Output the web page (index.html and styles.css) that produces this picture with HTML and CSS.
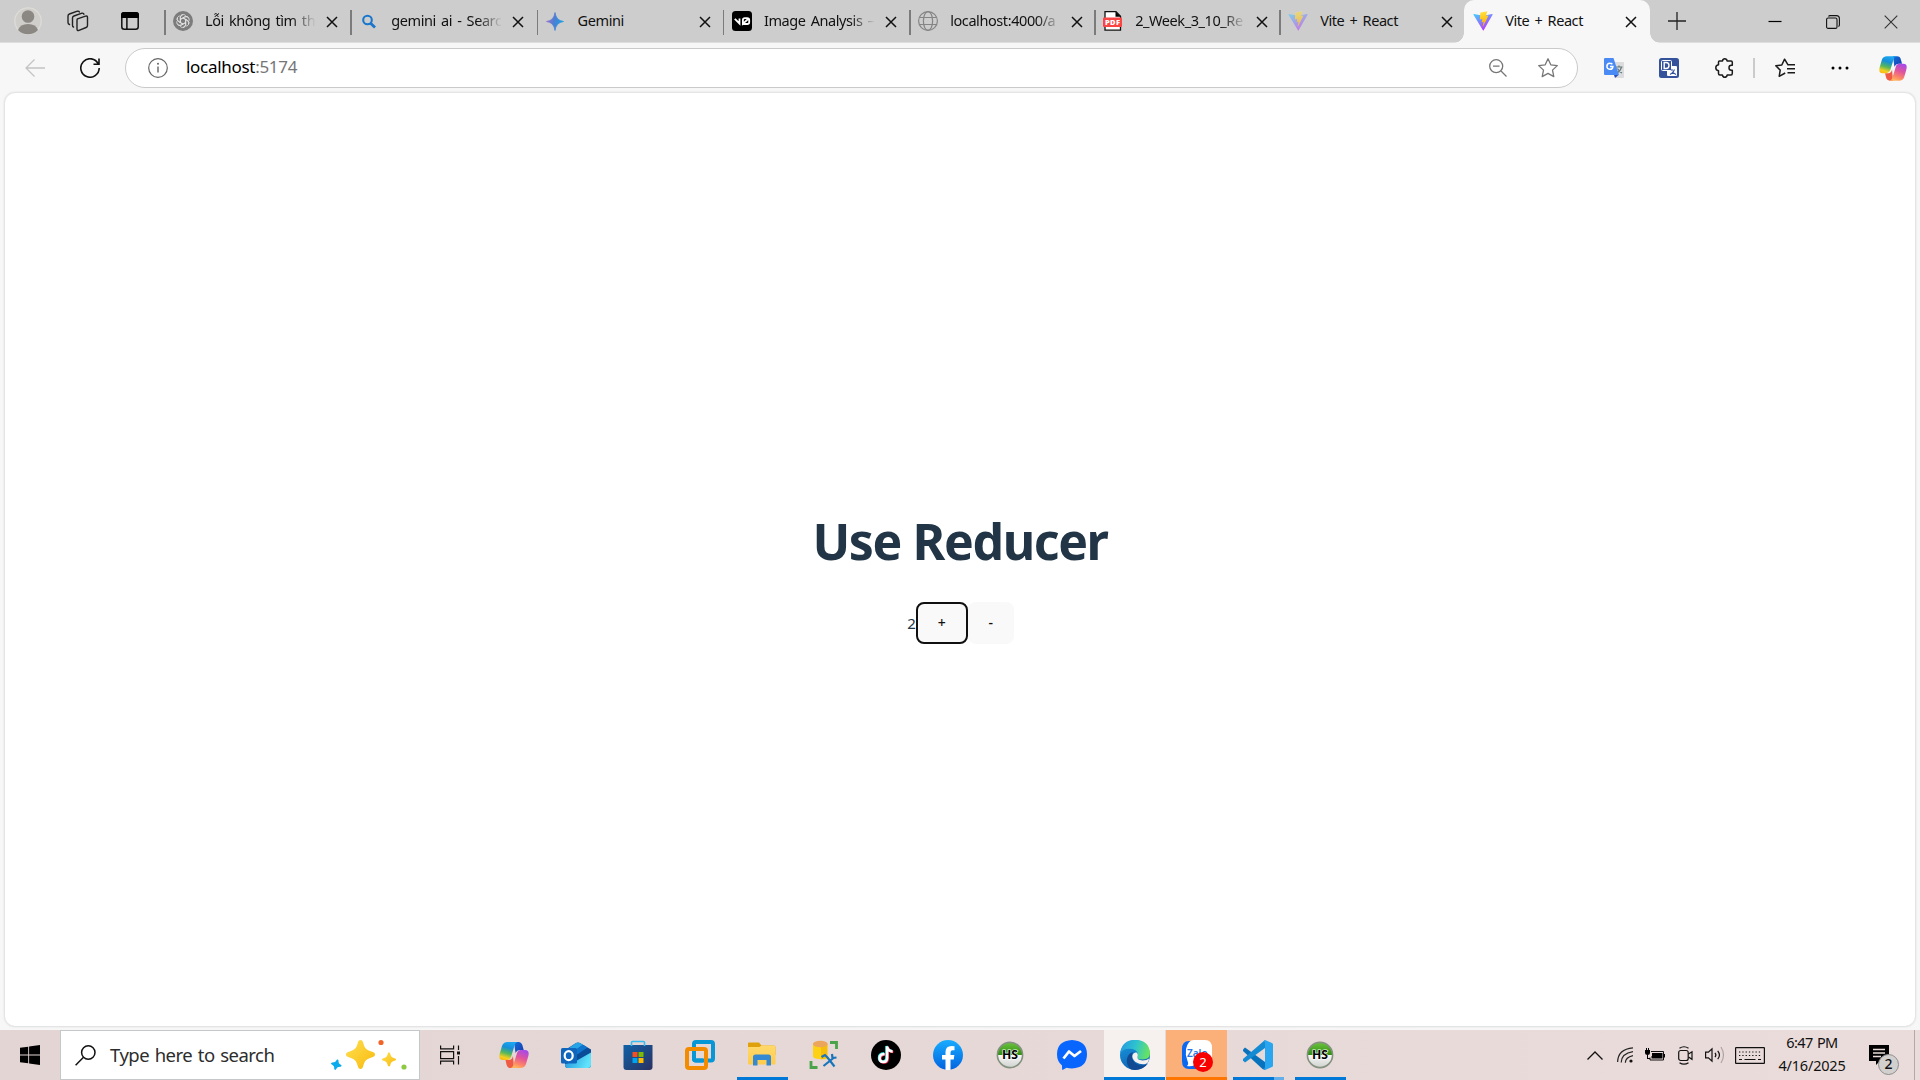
FILE: index.html
```html
<!DOCTYPE html>
<html lang="en">
<head>
<meta charset="utf-8">
<title>Vite + React</title>
<link rel="stylesheet" href="styles.css">
</head>
<body>
<svg class="defs" width="0" height="0" aria-hidden="true">
  <defs>
    <linearGradient id="cpA" x1=".5" y1="0" x2=".2" y2="1"><stop offset="0" stop-color="#1ba5f0"/><stop offset=".3" stop-color="#168fd8"/><stop offset=".6" stop-color="#55b75a"/><stop offset=".85" stop-color="#f4cf21"/><stop offset="1" stop-color="#fbb70c"/></linearGradient>
    <linearGradient id="cpB" x1=".8" y1="0" x2=".4" y2="1"><stop offset="0" stop-color="#a348ee"/><stop offset=".45" stop-color="#e1549c"/><stop offset=".8" stop-color="#fd8766"/><stop offset="1" stop-color="#ffb45e"/></linearGradient>
    <linearGradient id="cpC" x1="0" y1="0" x2="1" y2="1"><stop offset="0" stop-color="#0f6fdb"/><stop offset="1" stop-color="#1b38ad"/></linearGradient>
    <linearGradient id="vA" x1="0" y1="0" x2=".6" y2="1"><stop offset="0" stop-color="#41d1ff"/><stop offset="1" stop-color="#bd34fe"/></linearGradient>
    <linearGradient id="vB" x1=".5" y1="0" x2=".6" y2="1"><stop offset="0" stop-color="#ffea83"/><stop offset=".1" stop-color="#ffdd35"/><stop offset="1" stop-color="#ffa800"/></linearGradient>
    <linearGradient id="gem" x1="0" y1=".4" x2="1" y2=".6"><stop offset="0" stop-color="#9b72cb"/><stop offset=".45" stop-color="#4a7fd4"/><stop offset="1" stop-color="#1ba1e3"/></linearGradient>
    <linearGradient id="gold" x1="0" y1="0" x2="1" y2="1"><stop offset="0" stop-color="#ffe052"/><stop offset="1" stop-color="#f8b90c"/></linearGradient>
    <linearGradient id="store" x1="0" y1="0" x2="1" y2="1"><stop offset="0" stop-color="#0f62a8"/><stop offset="1" stop-color="#2b3160"/></linearGradient>
    <linearGradient id="fold" x1="0" y1="0" x2="0" y2="1"><stop offset="0" stop-color="#ffd96b"/><stop offset="1" stop-color="#ffcb4c"/></linearGradient>
    <linearGradient id="fb" x1="0" y1="0" x2="0" y2="1"><stop offset="0" stop-color="#18acfe"/><stop offset="1" stop-color="#0163e0"/></linearGradient>
    <linearGradient id="hs" x1="0" y1="0" x2="0" y2="1"><stop offset="0" stop-color="#6cc43c"/><stop offset=".5" stop-color="#2f8d12"/><stop offset=".51" stop-color="#f7f7f7"/><stop offset="1" stop-color="#cfd2ce"/></linearGradient>
    <linearGradient id="edA" x1="0" y1=".3" x2="1" y2=".5"><stop offset="0" stop-color="#269be0"/><stop offset=".5" stop-color="#2ec3cf"/><stop offset="1" stop-color="#6be45c"/></linearGradient>
    <linearGradient id="edB" x1="0" y1="0" x2=".4" y2="1"><stop offset="0" stop-color="#1a9ae0"/><stop offset="1" stop-color="#0f64b4"/></linearGradient>
    <linearGradient id="olA" x1="0" y1="0" x2="1" y2=".3"><stop offset="0" stop-color="#1c8fdc"/><stop offset="1" stop-color="#5fe3fb"/></linearGradient>
    <symbol id="close" viewBox="0 0 12 12"><path d="M1 1 11 11M11 1 1 11" fill="none" stroke="currentColor" stroke-width="1.5"/></symbol>
    <symbol id="copilot" viewBox="0 0 30 28">
      <path d="M15 1h4.500q3 0 4 3.500l1.200 4.500H21q-3 0-4.500 3z" fill="url(#cpC)"/>
      <path d="M15 27h-3.500q-3 0-4-3.500L6.500 19H10q3 0 4-4z" fill="#ee5a43"/>
      <path d="M8.500 1H19q-2.500 0-3.500 3.500L12 16q-1 3-4 3H4Q-1 19 .8 12.500L3 5Q4.300 1 8.500 1z" fill="url(#cpA)"/>
      <path d="M21.500 27H11q2.500 0 3.500-3.500L18 12q1-3 4-3h4q5 0 3.200 6.500L27 23q-1.300 4-5.500 4z" fill="url(#cpB)"/>
    </symbol>
    <symbol id="vite" viewBox="0 0 32 32">
      <path d="M31.300 5.900 17.100 30.900c-.3.500-1 .5-1.300 0L.8 5.900c-.3-.5.100-1.200.8-1.100L16.100 7.400h.3L30.500 4.800c.6-.1 1.100.6.800 1.100z" fill="url(#vA)"/>
      <path d="M22.300.3 12 2.300c-.2 0-.3.200-.3.300l-.7 10.500c0 .300.200.5.500.4l2.900-.7c.3-.1.500.2.500.5l-.9 4.100c-.1.300.2.500.5.400l1.800-.5c.3-.1.500.2.500.5l-1.400 6.500c-.1.400.5.600.7.300l.1-.2 8.500-16.800c.100-.300-.1-.600-.4-.500l-3 .6c-.3.100-.5-.2-.4-.5l1.900-6.700c.1-.3-.2-.6-.5-.5z" fill="url(#vB)"/>
    </symbol>
    <symbol id="hsi" viewBox="0 0 30 30">
      <circle cx="15" cy="15" r="12.600" fill="url(#hs)" stroke="#84917f" stroke-width="1.600"/>
      <text x="15" y="19.300" text-anchor="middle" font-family="Open Sans, sans-serif" font-weight="700" font-size="12" textLength="16" lengthAdjust="spacingAndGlyphs" stroke="#fff" stroke-width="1.200" paint-order="stroke">HS</text>
    </symbol>
    <symbol id="spark" viewBox="0 0 20 20"><path d="M10 0c1 0 1.500.7 1.800 1.700 1 3.900 2 5.100 6.200 6.400 1.300.4 2 1 2 1.900s-.7 1.500-2 1.900c-4.200 1.300-5.200 2.500-6.200 6.400C11.500 19.300 11 20 10 20s-1.500-.7-1.800-1.700c-1-3.900-2-5.100-6.200-6.400C.7 11.500 0 10.900 0 10s.7-1.500 2-1.900c4.200-1.300 5.200-2.500 6.200-6.400C8.500.7 9 0 10 0z"/></symbol>
  </defs>
</svg>

<header class="tabbar">
  <div class="slot s56"><svg width="28" height="28" viewBox="0 0 28 28"><circle cx="14" cy="14" r="13.200" fill="#d0cecb" stroke="#dedcd7" stroke-width="1.300"/><circle cx="14" cy="9.500" r="6.300" fill="#8b8783"/><path d="M4 23Q6 17 14 17t10 6q-4 4.300-10 4.300T4 23z" fill="#8b8783"/></svg></div>
  <div class="slot s44"><svg width="22" height="22" viewBox="0 0 22 22" fill="none" stroke="#222" stroke-width="1.400" stroke-linejoin="round" stroke-linecap="round"><path d="m10.500 8.800 8-2.700q2-.6 2 1.400v8q0 1.500-1.400 2L12 20.300q-2 .7-2-1.300v-8.500q0-1.300.5-1.700zM6.500 17q-1-.3-1-1.800V8q0-1.500 1.400-2L15 3.200q1.600-.3 2 1M2.500 14.500q-1.500-.5-1.500-2V6q0-1.500 1.400-2l8-2.800q1.500-.4 2 .8"/></svg></div>
  <div class="slot s64"><svg width="18" height="18" viewBox="0 0 18 18"><rect x=".8" y=".8" width="16.400" height="16.400" rx="2.500" fill="none" stroke="#111" stroke-width="1.500"/><path d="M0 6V3q0-3 3-3h12q3 0 3 3v3zM5.200 5h1.400v12H5.200z"/></svg></div>
  <nav class="tabs">
    <div class="tab"><svg class="fav" viewBox="0 0 20 20"><circle cx="10" cy="10" r="10" fill="#7c7c7c"/><g fill="none" stroke="#e6e6e6" stroke-width=".8"><path id="petal" d="M7.300 11.600V6.200q.3-2.600 2.900-2.700 1.700 0 2.600 1.200M7.300 8.500l4.600-2.600q2.200-.9 3.700.8"/><use href="#petal" transform="rotate(60 10 10)"/><use href="#petal" transform="rotate(120 10 10)"/><use href="#petal" transform="rotate(180 10 10)"/><use href="#petal" transform="rotate(240 10 10)"/><use href="#petal" transform="rotate(300 10 10)"/></g></svg><span class="name fade">Lỗi không tìm th</span><svg class="x"><use href="#close"/></svg></div>
    <div class="tab"><svg class="fav" viewBox="0 0 20 20" fill="none" stroke="#1a76cc"><circle cx="8.500" cy="9" r="4.300" stroke-width="2.100"/><path d="m11.600 12.200 4.400 4.400" stroke-width="2.800"/></svg><span class="name fade">gemini ai - Searc</span><svg class="x"><use href="#close"/></svg></div>
    <div class="tab"><svg class="fav" viewBox="0 0 20 20"><path d="M9 1.500Q10 9.500 17.500 10.500 10 11.500 9 19.500 8 11.500.5 10.500 8 9.500 9 1.500z" fill="url(#gem)" stroke="url(#gem)" stroke-width=".8"/></svg><span class="name">Gemini</span><svg class="x"><use href="#close"/></svg></div>
    <div class="tab"><svg class="fav" viewBox="0 0 20 20"><rect width="20" height="20" rx="3.500"/><path d="m2.800 7.800 4.700 4.700V7.500M11.200 13h4q2 0 2-1.800V9q0-1.800-2-1.800h-2.300q-2 0-2 1.800v3.800l5.700-5.300" fill="none" stroke="#fff" stroke-width="1.800"/></svg><span class="name fade">Image Analysis –</span><svg class="x"><use href="#close"/></svg></div>
    <div class="tab"><svg class="fav" viewBox="0 0 20 20" fill="none" stroke="#858585" stroke-width="1.200"><circle cx="10" cy="10" r="9.400"/><ellipse cx="10" cy="10" rx="4.600" ry="9.400"/><path d="M1.500 6.500h17M1.500 13.500h17"/></svg><span class="name fade">localhost:4000/a</span><svg class="x"><use href="#close"/></svg></div>
    <div class="tab"><svg class="fav" viewBox="0 0 20 20"><path d="M2 .7h11l4.500 4.500v14H2z" fill="#fff" stroke="#111" stroke-width="1.300"/><path d="M12.500.7v5h5z"/><rect x="0" y="6.500" width="19" height="9.500" rx="1" fill="#fa4545"/><text x="9.500" y="14" text-anchor="middle" font-family="Open Sans, sans-serif" font-weight="800" font-size="7.500" textLength="15" fill="#fff">PDF</text></svg><span class="name fade">2_Week_3_10_Re</span><svg class="x"><use href="#close"/></svg></div>
    <div class="tab"><svg class="fav dim"><use href="#vite"/></svg><span class="name">Vite + React</span><svg class="x"><use href="#close"/></svg></div>
    <div class="tab active"><svg class="fav"><use href="#vite"/></svg><span class="name">Vite + React</span><svg class="x"><use href="#close"/></svg></div>
  </nav>
  <div class="slot newtab"><svg width="18" height="18" viewBox="0 0 18 18"><path d="M9 0v18M0 9h18" stroke="#222" stroke-width="1.300"/></svg></div>
  <div class="windowctl">
    <svg width="14" height="14" viewBox="0 0 14 14"><path d="M.5 6.500h13" stroke="#000" stroke-width="1.200"/></svg>
    <svg width="14" height="14" viewBox="0 0 14 14" fill="none" stroke="#111" stroke-width="1.100"><rect x=".6" y="3" width="10.400" height="10.400" rx="1.500"/><path d="M2.500 1.500Q3 .6 4 .6h6.400q3 0 3 3V10q0 1-1 1.400"/></svg>
    <svg width="14" height="14" viewBox="0 0 14 14"><path d="m.7.700 12.600 12.600M13.300.7.700 13.300" stroke="#333" stroke-width="1.100"/></svg>
  </div>
</header>

<div class="toolbar">
  <div class="slot back"><svg width="20" height="18" viewBox="0 0 20 18" fill="none" stroke="#c4c4c4" stroke-width="1.300"><path d="M20 9H1M9.500.500 1 9l8.500 8.500"/></svg></div>
  <div class="slot reload"><svg width="20" height="20" viewBox="0 0 20 20" fill="none" stroke="#111" stroke-width="1.600"><path d="M18.300 6A9.200 9.200 0 1 0 19.200 10M19 .500v5.800h-5.500"/></svg></div>
  <div class="address">
    <svg width="20" height="20" viewBox="0 0 20 20"><circle cx="10" cy="10" r="9.300" fill="none" stroke="#666" stroke-width="1.200"/><path d="M10 8.500v6" stroke="#666" stroke-width="1.400"/><circle cx="10" cy="5.700" r="1" fill="#666"/></svg>
    <span class="url">localhost<span class="port">:5174</span></span>
    <svg class="zoomicon" width="18" height="18" viewBox="0 0 18 18" fill="none" stroke="#767676" stroke-width="1.300"><circle cx="7.200" cy="7.200" r="6.500"/><path d="m12 12 5.500 5.500M4 7.200h6.500"/></svg>
    <svg width="20" height="20" viewBox="0 0 20 20" fill="none" stroke="#767676" stroke-width="1.300" stroke-linejoin="round"><path d="m10 .8 2.800 6 6.500.8-4.800 4.500 1.300 6.500L10 15.400l-5.800 3.200 1.300-6.500L.7 7.600l6.500-.8z"/></svg>
  </div>
  <div class="slot translate"><svg width="20" height="20" viewBox="0 0 20 20"><path d="M8 4h11q1 0 1 1v14q0 1-1 1h-7z" fill="#dcdcdc"/><path d="M10 17h4.500l-3.500 3z" fill="#2b50b8"/><path d="M11.500 9h7M15 7.500V9m2.500 0q-.8 4-4.500 6m.5-4.500q1.500 3 4.500 4.500" fill="none" stroke="#61777b" stroke-width="1.200"/><path d="M1 0h8.500L15 17H1q-1 0-1-1V1q0-1 1-1z" fill="#4a8af4"/><path d="M8.300 6.300Q7.500 5.300 6 5.300a3 3 0 1 0 2.900 3.300H6" fill="none" stroke="#fff" stroke-width="1.500"/></svg></div>
  <div class="slot dict"><svg width="20" height="20" viewBox="0 0 20 20"><rect width="20" height="20" rx="2.500" fill="#34539b"/><rect x="2.500" y="2.500" width="10" height="10" rx="1" fill="none" stroke="#fff"/><path d="M5.200 4.500H7q3 0 3 3t-3 3H5.200z" fill="none" stroke="#fff" stroke-width="1.400"/><path d="M12.500 8H17q1 0 1 1v8q0 1-1 1H9q-1 0-1-1v-4.500h4.500z" fill="#fff"/><path d="M11 16.500q3.500-1.500 4.500-5M12 12h2m-1 2 4 2.500" fill="none" stroke="#34539b" stroke-width="1.100"/></svg></div>
  <div class="slot puzzle"><svg width="19" height="20" viewBox="0 0 19 20" fill="none" stroke="#1b1b1b" stroke-width="1.500" stroke-linejoin="round"><path d="M4.500 3h3Q7.800.8 9.800.8t2.300 2.200h4q1.200 0 1.200 1.200v3h-1q-2.300 0-2.300 2.500t2.300 2.500h1v3q0 1.800-1.300 1.800h-3.800q-.4 2.200-2.400 2.200T7.400 17H5q-1.500 0-1.500-1.500v-2.800Q.8 12.200.8 9.700t2.700-3V4q0-1 1-1z"/></svg></div>
  <i class="divider"></i>
  <div class="slot favs"><svg width="20" height="20" viewBox="0 0 20 20" fill="none" stroke="#1b1b1b" stroke-width="1.500" stroke-linejoin="round"><path d="M13 6.800 9.600 1.200 6.800 7l-6 .8 4.400 4.300-1 6.200 6-3.300M12.500 6.800H20M12 10.800h8M12.500 14.800H20"/></svg></div>
  <div class="slot more"><svg width="18" height="4" viewBox="0 0 18 4"><circle cx="2" cy="2" r="1.500"/><circle cx="9" cy="2" r="1.500"/><circle cx="16" cy="2" r="1.500"/></svg></div>
  <div class="slot side"><svg width="28" height="27"><use href="#copilot"/></svg></div>
</div>

<main class="viewport">
  <div class="page">
    <h1>Use Reducer</h1>
    <div class="counter"><span class="count">2</span><button class="btn focused">+</button><button class="btn minus">-</button></div>
  </div>
</main>

<footer class="taskbar">
  <div class="slot start"><svg width="20" height="20" viewBox="0 0 20 20"><path d="M0 2.800 8.200 1.700v7.900H0zM9.100 1.500 20 0v9.600H9.100zM0 10.500h8.200v7.800L0 17.200zM9.100 10.500H20V20L9.100 18.500z"/></svg></div>
  <div class="search">
    <svg width="21" height="21" viewBox="0 0 21 21" fill="none" stroke="#111" stroke-width="1.500"><circle cx="13.300" cy="7.500" r="6.700"/><path d="M8.500 12.300.6 20.200"/></svg>
    <span class="hint">Type here to search</span>
    <svg class="sparkles" width="78" height="34" viewBox="0 0 78 34"><use href="#spark" x="16" y="2" width="29" height="29" fill="url(#gold)"/><use href="#spark" x="52" y="14" width="14" height="15" fill="url(#gold)"/><use href="#spark" x="1" y="21" width="11" height="11" fill="#0cabeb" transform="rotate(15 6 26)"/><circle cx="51" cy="4.500" r="2.600" fill="#f16529"/><circle cx="74" cy="29" r="2.600" fill="#8fc843"/></svg>
  </div>
  <div class="slot taskview"><svg width="21" height="20" viewBox="0 0 21 20" fill="none" stroke="#111" stroke-width="1.200"><path d="M.6.500v3.300h13V.500M.6 19.500v-3.300h13v3.300M.6 6.600h13v7H.6zM18.500.500v4.500M18.500 11v8.500"/><path d="M17 6.500h3v3h-3z" fill="#111" stroke="none"/></svg></div>
  <div class="apps">
    <div class="app"><svg width="30" height="28"><use href="#copilot"/></svg></div>
    <div class="app"><svg width="30" height="28" viewBox="0 0 30 28"><path d="M4 9 15 2q2-1.200 4 0l11 6.500V24q0 3-3 3H7q-3 0-3-3z" fill="#0a4c98"/><path d="M5 9 15 2q2-1.200 4 0l3 1.800L9 13z" fill="#27a4e6"/><path d="m22 3.800 4.500 2.700L14 15l-5-2z" fill="#0f74cd"/><path d="M30 11.500V24q0 3-3 3H7q-3 0-3-3v-1l11-3z" fill="url(#olA)"/><rect x="0" y="7" width="16" height="15.500" rx="1.500" fill="#1066bd"/><ellipse cx="7.700" cy="14.700" rx="4" ry="4.500" fill="none" stroke="#fff" stroke-width="2.200"/></svg></div>
    <div class="app"><svg width="30" height="30" viewBox="0 0 30 30"><path d="M.5 5h29v22q0 3-3 3h-23q-3 0-3-3z" fill="url(#store)"/><path d="M8.500 6V2.500q0-1 1-1h11q1 0 1 1V6" fill="none" stroke="#35bdf2" stroke-width="1.600"/><path d="M9.500 12h5v5h-5z" fill="#f25022"/><path d="M15.500 12h5v5h-5z" fill="#7fba00"/><path d="M9.500 18h5v5h-5z" fill="#00a4ef"/><path d="M15.500 18h5v5h-5z" fill="#ffb900"/></svg></div>
    <div class="app"><svg width="30" height="30" viewBox="0 0 30 30" fill="none" stroke-width="4"><rect x="9" y="2" width="19" height="18.500" rx="2" stroke="#0797d7"/><rect x="2" y="9" width="19" height="19" rx="2" stroke="#f38b00"/><path d="M9 12v6.500q0 2 2 2h7" stroke="#0797d7"/></svg></div>
    <div class="app running"><svg width="28" height="26" viewBox="0 0 28 26"><path d="M0 1.500Q0 .500 1 .500h10l2.500 3H26q1.500 0 1.500 1.500v8H0z" fill="#dfa10b"/><path d="M0 5h11.500l2-1.500H26q1.500 0 1.500 1.500v16.500q0 1-1 1H1q-1 0-1-1z" fill="url(#fold)"/><path d="M5 23.500V15q0-2.500 2.500-2.500h13q2.500 0 2.500 2.500v8.500h-4.500V18h-9v5.500z" fill="#3489d2"/></svg></div>
    <div class="app"><svg width="30" height="30" viewBox="0 0 30 30"><path d="M4 4v13q3 3 14 2V4z" fill="#fcd116"/><path d="M12 7v12.500l6.500-2V4z" fill="#f6bd0a"/><ellipse cx="11.300" cy="4" rx="7.400" ry="3.300" fill="#eba65b"/><path d="M21 2.500h6.500V9M2 21v6.500h6.500" fill="none" stroke="#49a34b" stroke-width="2.800"/><path d="m12.500 17 3.500-2 2.500 2.500 7 9M24.500 18 14.500 26M23 14l.5 4 4-.5" fill="none" stroke="#1775bb" stroke-width="2.200"/></svg></div>
    <div class="app"><svg width="30" height="30" viewBox="0 0 30 30" fill="none"><circle cx="15" cy="15" r="15" fill="#000"/><g stroke-width="2.500"><path d="M13 13.500q-5 0-5 4.300 0 3.700 3.700 3.700t3.800-4V6q.5 4.500 5.500 5" stroke="#24f6ef"/><path d="M14.300 14.500q-5 0-5 4.300 0 3.700 3.700 3.700t3.800-4V7q.5 4.500 5.500 5" stroke="#fe2c55"/><path d="M13.600 14q-5 0-5 4.300 0 3.700 3.700 3.700t3.800-4V6.500q.5 4.500 5.500 5" stroke="#fff"/></g></svg></div>
    <div class="app"><svg width="30" height="30" viewBox="0 0 30 30"><circle cx="15" cy="15" r="15" fill="url(#fb)"/><path d="M12.500 30V19.500H9V15h3.500v-3q0-6 6-6 1.500 0 3 .3v3.900h-1.800q-2.200 0-2.200 2.300V15h3.900l-.7 4.500h-3.200V30z" fill="#fff"/></svg></div>
    <div class="app"><svg width="30" height="30"><use href="#hsi"/></svg></div>
    <div class="app"><svg width="30" height="30" viewBox="0 0 30 30"><path d="M15 0q15 .8 15 14.300T15 28.500q-3 0-5.500-.8L5.500 30q-.5 0-.5-4.500Q0 21.500 0 14.300 0 .8 15 0z" fill="#0866ff"/><path d="m6.500 18.500 5.500-7 5.500 4.500 6.500-5" fill="none" stroke="#fff" stroke-width="2.800" stroke-linejoin="round"/></svg></div>
    <div class="app running current"><svg width="30" height="30" viewBox="0 0 30 30"><circle cx="15" cy="15" r="15" fill="url(#edB)"/><path d="M.2 13Q2 0 15 0q14 0 15 13 0 6.500-7.500 6.500-5.500 0-5-2.500 2-6-5-8Q4 7.500.2 13z" fill="url(#edA)"/><path d="M11 29.500Q5 24 7.500 17q1.500-4 6-5-1.500 1.500-1.500 4 0 7.500 8.500 9.500 4.500.5 7.500-2-6 8-17 6z" fill="#114a92"/><path d="M17.500 17q-.5 3 5 3.500 4.500 0 6.500-2-.3 4.500-3.500 5.500-5 1-10-2-4-3.500-3-7 1-3 4-2.500 2 1.500 1 4.500z" fill="#f6f0ee"/></svg></div>
    <div class="app running alert"><svg width="32" height="30" viewBox="0 0 32 30"><path d="M8 1h16q6 0 6 6v13q0 9-9 9H8q-7 0-7-8V9q0-8 7-8z" fill="#0b68f1"/><path d="M13 0h11q7 0 7 8v9q0 8-7 8H14q-4 2-8 1 2-2 .5-5Q4 15 5 9q2-9 8-9z" fill="#fff"/><text x="6" y="17" font-family="Noto Sans, sans-serif" font-size="10" font-weight="600" fill="#2576e6">Zalo</text></svg><b class="badge">2</b></div>
    <div class="app running multi"><svg width="30" height="30" viewBox="0 0 30 30"><path d="m2 7.500-2 2v1.500l19.500 18L22 30V22z" fill="#0872bd"/><path d="M0 19v1.500l2 2L22 8V0z" fill="#158bd4"/><path d="m22 0 7 3q1 .5 1 1.500v21q0 1-1 1.500l-7 3-2-2q2 1.500 2-1V3q0-2-2-1z" fill="#29a6ef"/></svg></div>
    <div class="app running"><svg width="30" height="30"><use href="#hsi"/></svg></div>
  </div>
  <div class="tray">
    <div class="slot s30"><svg width="16" height="9" viewBox="0 0 16 9"><path d="m.5 8.500 7.500-7.500 7.500 7.500" fill="none" stroke="#111" stroke-width="1.300"/></svg></div>
    <div class="slot s30"><svg width="16" height="16" viewBox="0 0 16 16" fill="none" stroke="#222" stroke-width="1.200"><path d="M.6 15Q1 2 16 .8M4.200 15.500Q4.500 6.500 16 4.700M8.300 15.800Q8.500 10.500 16 8.700"/><circle cx="14" cy="14" r="1.600" fill="#111" stroke="none"/></svg></div>
    <div class="slot s30"><svg width="20" height="14" viewBox="0 0 20 14"><path d="M6 3.500h12.500V12H5V9.500" fill="none" stroke="#111"/><path d="M7 5h10.500v5.500H6.500V8H7zM19 6h1v3.500h-1zM0 2h5v3q0 2-2.500 2T0 5zM1 0h1v2H1zM3 0h1v2H3zM2 7h1v3h2v1H2z"/></svg></div>
    <div class="slot s30"><svg width="15" height="19" viewBox="0 0 15 19" fill="none" stroke="#111" stroke-width="1.200"><rect x=".7" y="4.500" width="9.500" height="10" rx="2"/><path d="m10.500 8 3.500-2.200v7.500L10.500 11M1.500 2.300Q6-.8 10.500 2.300M1.500 16.700q4.500 3 9 0"/></svg></div>
    <div class="slot s30"><svg width="20" height="18" viewBox="0 0 20 18" fill="none" stroke="#111" stroke-width="1.200"><path d="M.6 6.200h2.800L7 2.800v12.400l-3.600-3.400H.6zM10 6.800q1.800 2.200 0 4.400M12.700 4.800q3.500 4.200 0 8.400"/><path d="M16 1q5 8 0 16" stroke="#b0a4a3"/></svg></div>
    <div class="slot keyboard"><svg width="30" height="17" viewBox="0 0 30 17" fill="none" stroke="#111" stroke-width="1.200"><rect x=".6" y=".6" width="28.800" height="15.800" rx=".5"/><path d="M4 5h23M4 8.500h23" stroke-dasharray="1.300 2"/><path d="M4 12.500h3M9.500 12.500h11M23 12.500h3"/></svg></div>
    <div class="clock"><span class="time">6:47 PM</span><span class="date">4/16/2025</span></div>
    <div class="notify"><svg width="20" height="20" viewBox="0 0 20 20"><path d="M0 0h20v16h-9l-4 4v-4H0z"/><path d="M4 4.500h12M4 8h12M4 11.500h8" stroke="#e9dbd9" stroke-width="1.300"/></svg><b class="count2">2</b></div>
    <i class="desktop"></i>
  </div>
</footer>
</body>
</html>
```
FILE: styles.css
```css
* { box-sizing: border-box; }
body {
  margin: 0;
  width: 1920px;
  height: 1080px;
  overflow: hidden;
  display: flex;
  flex-direction: column;
  background: #f7f7f7;
  color: #111;
  font-family: "Noto Sans", sans-serif;
}
svg { display: block; flex: none; }
.defs { position: absolute; }
.slot { display: flex; align-items: center; justify-content: center; flex: none; }

/* tab strip */
.tabbar { height: 43px; display: flex; background: #cdcdcd; border-bottom: 1px solid #dedede; flex: none; }
.tabbar > .slot { height: 42px; }
.s56 { width: 56px; }
.s44 { width: 44px; }
.s64 { width: 64px; padding-right: 4px; }
.tabs { display: grid; grid-template-columns: repeat(4, 186.3px) repeat(3, 185px) 186px; width: 1486px; flex: none; height: 43px; }
.tab { display: flex; align-items: center; height: 42px; padding-left: 8px; position: relative; min-width: 0; }
.tab:not(.active)::before { content: ""; width: 1.500px; height: 25px; background: #7b7b7b; margin-left: -8px; margin-right: 7.500px; margin-top: 2px; flex: none; }
.fav { width: 20px; height: 20px; }
.fav.dim { opacity: .55; }
.name { width: 111px; margin-left: 12px; flex: none; white-space: nowrap; font-size: 14.500px; line-height: 24px; letter-spacing: -.42px; word-spacing: 1.800px; margin-top: -2px; }
.fade { -webkit-mask-image: linear-gradient(90deg, #000 78%, transparent 100%); mask-image: linear-gradient(90deg, #000 78%, transparent 100%); }
.x { width: 12px; height: 12px; margin-left: 10px; margin-top: 2px; }
.active { background: #f7f7f7; height: 43px; border-radius: 10px 10px 0 0; padding-left: 9px; padding-bottom: 1px; }
.active .x { margin-left: 9px; }
.active::before, .active::after { content: ""; position: absolute; bottom: 0; width: 10px; height: 10px; }
.active::before { left: -10px; background: radial-gradient(circle at 0 0, transparent 9.500px, #f7f7f7 10px); }
.active::after { right: -10px; background: radial-gradient(circle at 100% 0, transparent 9.500px, #f7f7f7 10px); }
.newtab { width: 54px; }
.windowctl { display: grid; grid-template-columns: repeat(3, 58px); place-items: center; margin-left: auto; height: 43px; }

/* address row */
.toolbar { height: 50px; display: flex; align-items: center; flex: none; }
.back { width: 45px; margin-left: 12px; }
.reload { width: 45px; margin-left: 10px; margin-right: 13px; }
.address { width: 1453px; height: 40px; border: 1px solid #cacaca; border-radius: 20px; background: #fff; display: flex; align-items: center; padding: 0 19px 0 22px; flex: none; }
.url { margin-left: 18px; font-size: 17px; letter-spacing: -.3px; line-height: 28px; margin-top: -2px; color: #000; }
.port { color: #767676; }
.zoomicon { margin-left: auto; margin-right: 31px; }
.translate { width: 55px; margin-left: 8px; }
.dict { width: 55px; }
.puzzle { width: 56px; }
.divider { width: 2px; height: 20px; background: #cbcbcb; margin: 0 1px; flex: none; }
.favs { width: 57px; }
.more { width: 53px; }
.side { width: 53px; }

/* page */
.viewport { height: 933px; margin: 0 5px 4px; flex: none; background: #fff; border-radius: 10px; box-shadow: 0 0 2px 1px #dedede; display: flex; align-items: center; justify-content: center; }
.page { text-align: center; color: #213547; padding-top: 37px; }
h1 { font-size: 50px; line-height: 56px; font-weight: 700; margin: 0 0 33px; letter-spacing: -1.400px; }
.counter { display: flex; align-items: center; justify-content: center; }
.count { font-size: 15px; margin-left: 1px; }
.btn { font: 500 14px/21px "Noto Sans", sans-serif; height: 42px; padding: 0; border: 0; border-radius: 8px; background: #f9f9f9; color: #111; }
.focused { width: 52px; border: 2px solid #101010; }
.minus { width: 46px; }

/* taskbar */
.taskbar { height: 50px; display: flex; background: linear-gradient(90deg, #e3d5d4, #e6d8d6 50%, #eadcdb); flex: none; }
.start { width: 60px; }
.search { width: 360px; border: 1px solid #c5c8c8; background: #fff; display: flex; align-items: center; padding: 0 11px 0 14px; flex: none; }
.hint { font-size: 18.500px; margin-left: 14px; letter-spacing: -.5px; word-spacing: 1.200px; color: #2d2d2d; white-space: nowrap; margin-top: -2px; }
.sparkles { margin-left: auto; }
.taskview { width: 63px; padding-right: 3px; }
.apps { display: grid; grid-template-columns: repeat(14, 62px); height: 50px; }
.app { display: flex; align-items: center; justify-content: center; position: relative; }
.running { background: linear-gradient(#0078d7, #0078d7) center bottom / 51px 3px no-repeat; }
.current { background: linear-gradient(#0078d7, #0078d7) center bottom / 100% 3px no-repeat #f6f0ee; margin-left: 1px; }
.alert { background: linear-gradient(#ff7500, #ff7500) center bottom / 100% 3px no-repeat #fbb07a; margin-left: 1px; }
.multi { background: linear-gradient(90deg, #0078d7 41px, #64aeea 41px) center bottom / 51px 3px no-repeat; }
.badge { position: absolute; left: 27px; top: 22px; width: 20px; height: 20px; border-radius: 50%; background: #f80000; color: #fff; font: 400 13px/20px "Noto Sans", sans-serif; text-align: center; }
.tray { display: flex; margin-left: auto; flex: none; }
.s30 { width: 30px; }
.keyboard { width: 40px; }
.clock { width: 84px; display: flex; flex-direction: column; align-items: center; justify-content: center; font-size: 14.500px; line-height: 23px; padding-bottom: 2px; white-space: nowrap; }
.time { letter-spacing: -.6px; word-spacing: 1px; }
.date { letter-spacing: -.2px; }
.notify { width: 60px; position: relative; display: flex; padding: 15px 0 0 15px; }
.count2 { position: absolute; left: 24px; top: 24px; width: 21px; height: 21px; border-radius: 50%; border: 1px solid #8d8d8d; background: #d2d0cf; color: #111; font: 500 14px/18px "Noto Sans", sans-serif; text-align: center; }
.desktop { width: 6px; border-left: 1px solid #b3a9a8; }
```
